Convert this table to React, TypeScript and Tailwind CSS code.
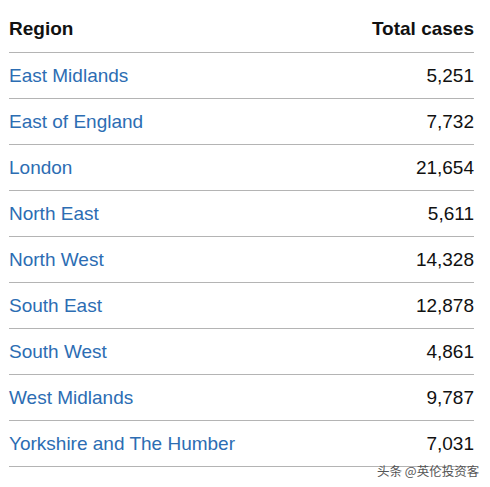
import React from "react";

const rows: [string, string][] = [
  ["East Midlands", "5,251"],
  ["East of England", "7,732"],
  ["London", "21,654"],
  ["North East", "5,611"],
  ["North West", "14,328"],
  ["South East", "12,878"],
  ["South West", "4,861"],
  ["West Midlands", "9,787"],
  ["Yorkshire and The Humber", "7,031"],
];

export default function App() {
  return (
    <div
      className="relative w-[490px] h-[487px] bg-white pl-[9px] pr-[16px]"
      style={{ fontFamily: '"Liberation Sans", Arial, sans-serif' }}
    >
      <div className="flex justify-between items-center pt-[18px] pb-[12px] border-b border-[#b4b4b4] text-[19px] leading-[22px] font-bold text-[#111]">
        <span>Region</span>
        <span>Total cases</span>
      </div>
      {rows.map(([r, n]) => (
        <div
          key={r}
          className="flex justify-between items-center h-[46px] border-b border-[#b4b4b4] text-[19px] leading-[22px]"
        >
          <span className="text-[#2c6db3]">{r}</span>
          <span className="text-[#111]">{n}</span>
        </div>
      ))}
      <div
        className="absolute left-[377px] top-[463px] text-[12.5px] leading-[16px] text-[#555]"
        style={{ fontFamily: '"Noto Sans CJK SC", sans-serif' }}
      >
        头条 @英伦投资客
      </div>
    </div>
  );
}
